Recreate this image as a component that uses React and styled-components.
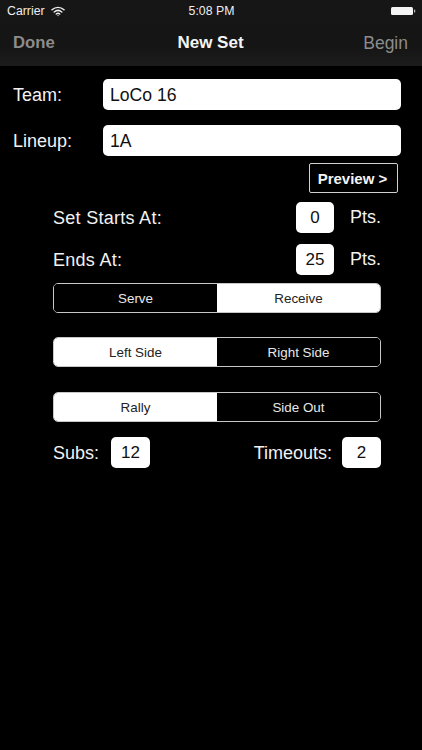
import React from "react";
import styled, { createGlobalStyle } from "styled-components";

const Global = createGlobalStyle`
  html, body { margin: 0; padding: 0; background: #000; }
  body { font-family: "Liberation Sans", Arial, sans-serif; -webkit-font-smoothing: antialiased; }
  * { box-sizing: border-box; }
`;
const Screen = styled.div`
  width: 422px; height: 750px; background: #000; color: #f2f2f2; overflow: hidden;
`;
const Header = styled.header`
  height: 66px; background: linear-gradient(#161616 0%, #151515 70%, #1c1c1c 100%);
`;
const StatusBar = styled.div`
  height: 22px; display: grid; grid-template-columns: 1fr auto 1fr; align-items: center;
  padding: 0 6px 0 7px; font-size: 12.3px; color: #eee;
`;
const StatusLeft = styled.div`display: flex; align-items: center; gap: 6px;`;
const StatusTime = styled.div`font-size: 12.3px;`;
const StatusRight = styled.div`display: flex; justify-content: flex-end;`;
const NavBar = styled.div`
  height: 44px; display: grid; grid-template-columns: 1fr auto 1fr; align-items: center;
  padding: 0 14px 2px 13px; font-size: 17.5px;
`;
const NavButton = styled.div`
  color: #8c8c8c; font-weight: ${p => (p.$bold ? 700 : 400)};
  font-size: ${p => (p.$bold ? 16.7 : 17.5)}px;
  text-align: ${p => p.$align || "left"};
`;
const NavTitle = styled.div`font-weight: 700; color: #f4f4f4; font-size: 17px;`;
const Content = styled.main`display: flex; flex-direction: column; padding-top: 13px;`;
const FieldRow = styled.div`
  display: grid; grid-template-columns: 90px 298px; align-items: center;
  padding-left: 13px; margin-bottom: 15px; font-size: 18px;
`;
const FieldLabel = styled.span`padding-top: 2px;`;
const Input = styled.div`
  height: 31px; background: #fff; color: #111; border-radius: 5px;
  display: flex; align-items: center; padding: 2px 0 0 7px; font-size: 17.6px;
`;
const PreviewWrap = styled.div`display: flex; justify-content: flex-end; padding-right: 24px; margin-top: -8px;`;
const Preview = styled.div`
  width: 89px; height: 30px; border: 1px solid #d0d0d0; border-radius: 2px;
  display: flex; align-items: center; justify-content: center; padding-right: 2px;
  font-size: 15px; font-weight: 700; color: #f4f4f4;
`;
const Panel = styled.div`display: flex; flex-direction: column; margin: 0 41px 0 53px; padding-top: 9px;`;
const PointsRow = styled.div`
  display: flex; align-items: center; height: 31px; margin-bottom: ${p => p.$mb}px; font-size: 18px;
`;
const RowLabel = styled.span`padding-top: 2px; letter-spacing: 0.28px;`;
const Grow = styled.div`flex: 1;`;
const NumBox = styled.div`
  width: ${p => p.$w || 38}px; height: 31px; background: #fff; color: #111; border-radius: 5px;
  display: flex; align-items: center; justify-content: center; padding-top: 1px; font-size: 17px;
`;
const Pts = styled.div`margin-left: 16px; width: 31px; font-size: 18px; white-space: nowrap;`;
const Segmented = styled.div`
  display: grid; grid-template-columns: 1fr 1fr; height: 30px; margin-bottom: ${p => p.$mb || 0}px;
  border: 1px solid #c8c8c8; border-radius: 5px; overflow: hidden;
`;
const Segment = styled.div`
  display: flex; align-items: center; justify-content: center; font-size: 13.4px;
  background: ${p => (p.$on ? "#fff" : "#000")}; color: ${p => (p.$on ? "#222" : "#e8e8e8")};
`;
const BottomRow = styled.div`display: flex; align-items: center; font-size: 18px; height: 31px; margin-top: 15px;`;
const BottomLabel = styled.div`margin-right: ${p => p.$mr}px; padding-top: 1px;`;

const Wifi = () => (
  <svg width="14" height="11" viewBox="0 0 14 11" fill="none" stroke="#eee" strokeWidth="1.5" strokeLinecap="round">
    <path d="M1 3.8C4.6.6 9.4.6 13 3.8" />
    <path d="M3.2 6C5.5 4 8.5 4 10.8 6" />
    <path d="M5.3 8C6.3 7.2 7.7 7.2 8.7 8" />
    <circle cx="7" cy="9.6" r="0.7" fill="#eee" stroke="none" />
  </svg>
);
const Battery = () => (
  <svg width="25" height="10" viewBox="0 0 25 10">
    <rect x="0" y="1" width="22" height="8" rx="1.5" fill="#f4f4f4" />
    <rect x="23" y="3.5" width="1.2" height="3" rx="0.5" fill="#bbb" />
  </svg>
);

export default function App() {
  return (
    <Screen>
      <Global />
      <Header>
        <StatusBar>
          <StatusLeft>Carrier <Wifi /></StatusLeft>
          <StatusTime>5:08 PM</StatusTime>
          <StatusRight><Battery /></StatusRight>
        </StatusBar>
        <NavBar>
          <NavButton $bold>Done</NavButton>
          <NavTitle>New Set</NavTitle>
          <NavButton $align="right">Begin</NavButton>
        </NavBar>
      </Header>
      <Content>
        <FieldRow><FieldLabel>Team:</FieldLabel><Input>LoCo 16</Input></FieldRow>
        <FieldRow><FieldLabel>Lineup:</FieldLabel><Input>1A</Input></FieldRow>
        <PreviewWrap><Preview>Preview &gt;</Preview></PreviewWrap>
        <Panel>
          <PointsRow $mb={11}>
            <RowLabel>Set Starts At:</RowLabel><Grow /><NumBox>0</NumBox><Pts>Pts.</Pts>
          </PointsRow>
          <PointsRow $mb={8}>
            <RowLabel>Ends At:</RowLabel><Grow /><NumBox>25</NumBox><Pts>Pts.</Pts>
          </PointsRow>
          <Segmented $mb={24}><Segment>Serve</Segment><Segment $on>Receive</Segment></Segmented>
          <Segmented $mb={25}><Segment $on>Left Side</Segment><Segment>Right Side</Segment></Segmented>
          <Segmented><Segment $on>Rally</Segment><Segment>Side Out</Segment></Segmented>
          <BottomRow>
            <BottomLabel $mr={12}>Subs:</BottomLabel>
            <NumBox $w={39}>12</NumBox>
            <Grow />
            <BottomLabel $mr={10}>Timeouts:</BottomLabel>
            <NumBox $w={39}>2</NumBox>
          </BottomRow>
        </Panel>
      </Content>
    </Screen>
  );
}
